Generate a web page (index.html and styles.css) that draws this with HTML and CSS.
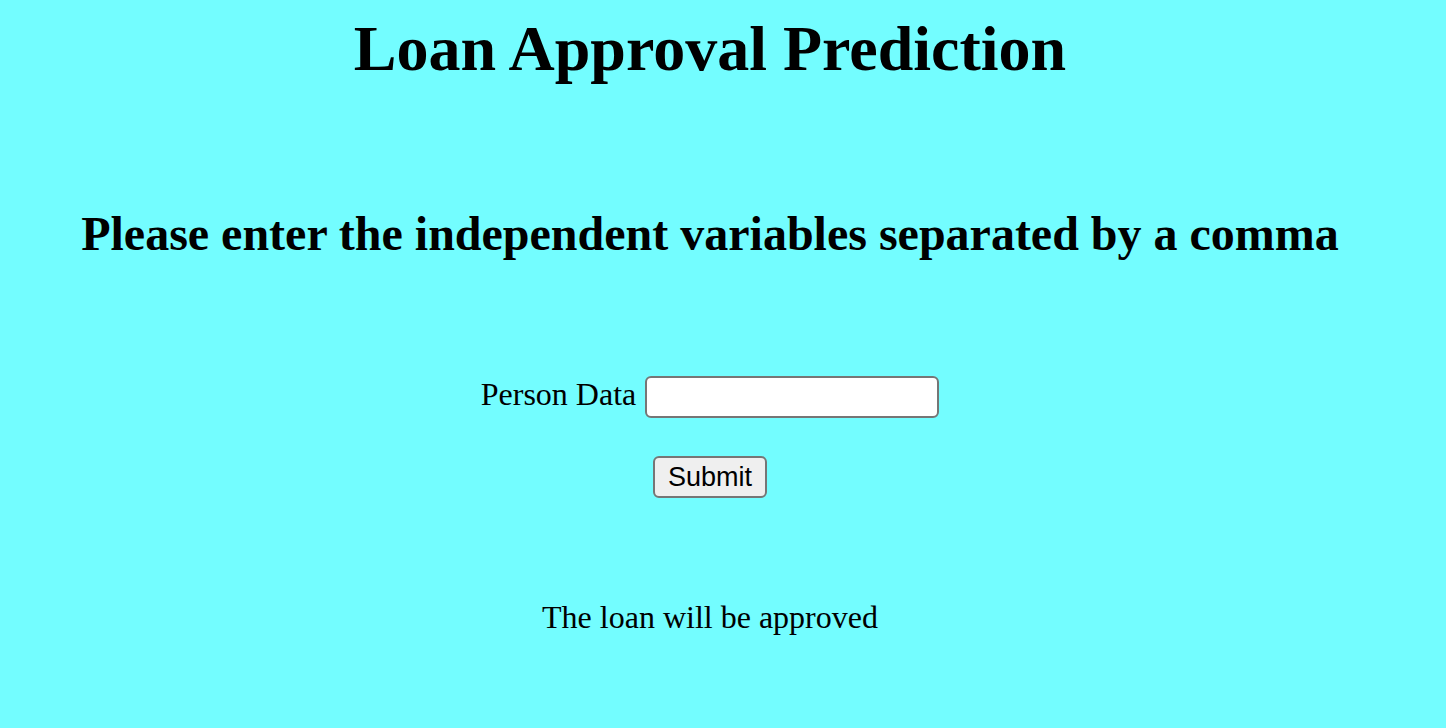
FILE: index.html
```html
<!DOCTYPE html>
<html lang="en">
<head>
<meta charset="utf-8">
<title>Loan Approval Prediction</title>
<link rel="stylesheet" href="styles.css">
</head>
<body>
<div class="page">
  <h1 class="title">Loan Approval Prediction</h1>
  <h2 class="subtitle">Please enter the independent variables separated by a comma</h2>
  <form class="form">
    <div class="field-row">
      <label class="field-label" for="data">Person Data</label>
      <input class="field-input" id="data" type="text">
    </div>
    <button class="submit-btn" type="button">Submit</button>
  </form>
  <p class="result">The loan will be approved</p>
</div>
</body>
</html>
```
FILE: styles.css
```css
html, body {
  margin: 0;
  padding: 0;
  background: #73fdff;
}
body {
  font-family: "Liberation Serif", "Times New Roman", serif;
  color: #000;
  height: 728px;
  overflow: hidden;
}
.page {
  width: 1420px;
  display: flex;
  flex-direction: column;
  align-items: center;
}
.title {
  margin: 12px 0 0;
  font-size: 64px;
  font-weight: bold;
  line-height: normal;
}
.subtitle {
  margin: 120px 0 0;
  font-size: 48px;
  font-weight: bold;
  line-height: normal;
}
.form {
  margin: 115px 0 0;
  display: flex;
  flex-direction: column;
  align-items: center;
}
.field-row {
  display: flex;
  align-items: flex-start;
  gap: 9px;
}
.field-label {
  font-size: 32px;
  line-height: normal;
}
.field-input {
  box-sizing: border-box;
  width: 294px;
  height: 42px;
  margin: 0;
  border: 2px solid #767676;
  border-radius: 6px;
  background: #fff;
  padding: 2px 4px;
  font-family: "Liberation Sans", Arial, sans-serif;
  font-size: 26px;
}
.submit-btn {
  box-sizing: border-box;
  margin: 38px 0 0;
  width: 114px;
  height: 42px;
  border: 2px solid #767676;
  border-radius: 6px;
  background: #efefef;
  padding: 0;
  font-family: "Liberation Sans", Arial, sans-serif;
  font-size: 27px;
  color: #000;
}
.result {
  margin: 101px 0 0;
  font-size: 32px;
  line-height: normal;
}
```
